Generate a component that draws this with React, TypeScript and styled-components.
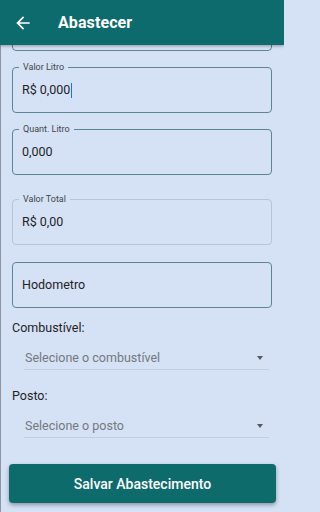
import React from "react";
import styled, { createGlobalStyle } from "styled-components";

const Global = createGlobalStyle`
  html, body { margin: 0; padding: 0; }
  body { font-family: Roboto, "Noto Sans", Arial, sans-serif; background: #d5e2f6; }
  * { box-sizing: border-box; }
`;

const Screen = styled.div`
  width: 284px;
  height: 512px;
  overflow: hidden;
  background: #d5e2f6;
  display: flex;
  flex-direction: column;
  position: relative;
`;

const Header = styled.header`
  height: 45px;
  flex: 0 0 45px;
  background: #0e6b6d;
  display: flex;
  align-items: center;
  padding-left: 13px;
  gap: 25px;
  position: relative;
  z-index: 2;
  box-shadow: 0 1px 3px rgba(0, 0, 0, 0.35);
`;

const BackButton = styled.button`
  width: 20px;
  height: 20px;
  padding: 0;
  border: 0;
  background: transparent;
  display: flex;
  align-items: center;
  justify-content: center;
  margin-top: 1px;
`;

const Title = styled.h1`
  margin: 1px 0 0 0;
  color: #ffffff;
  font-size: 16px;
  line-height: 20px;
  font-weight: 700;
  letter-spacing: 0.1px;
`;

const Body = styled.div`
  flex: 1;
  display: flex;
  flex-direction: column;
  border-left: 1px solid #8c96a4;
  overflow: hidden;
`;

const Form = styled.div`
  display: flex;
  flex-direction: column;
  padding: 0 12px 0 11px;
`;

const Field = styled.div<{ $muted?: boolean; $gap?: number }>`
  position: relative;
  flex: 0 0 46px;
  height: 46px;
  margin-top: ${(p) => p.$gap ?? 16}px;
  border: 1px solid ${(p) => (p.$muted ? "#b6c4d6" : "#5b8794")};
  border-radius: 4px;
  display: flex;
  align-items: center;
  padding: 0 9px;
  &:first-child {
    margin-top: -40px;
  }
`;

const FieldLabel = styled.span`
  position: absolute;
  left: 6px;
  top: -6px;
  padding: 0 4px;
  background: #d5e2f6;
  font-size: 9px;
  line-height: 11px;
  color: #3f4448;
`;

const Value = styled.span`
  font-size: 12.5px;
  color: #1f2225;
  display: flex;
  align-items: center;
  line-height: 16px;
`;

const Caret = styled.span`
  display: inline-block;
  width: 1px;
  height: 15px;
  background: #1a73e8;
  margin-left: 1px;
`;

const SectionLabel = styled.div<{ $gap: number }>`
  margin-top: ${(p) => p.$gap}px;
  font-size: 12.5px;
  line-height: 15px;
  color: #1f2225;
`;

const Picker = styled.div`
  margin: 11px 3px 0 12px;
  height: 24px;
  border-bottom: 1px solid #c3cedd;
  display: flex;
  align-items: center;
  justify-content: space-between;
  padding: 0 6px 1px 1px;
`;

const PickerText = styled.span`
  font-size: 12.5px;
  color: #74787c;
`;

const DropCaret = styled.span`
  width: 0;
  height: 0;
  border-left: 3.5px solid transparent;
  border-right: 3.5px solid transparent;
  border-top: 4px solid #555a5e;
  margin-top: 1px;
`;

const Footer = styled.div`
  padding: 26px 8px 0 8px;
`;

const SaveButton = styled.button`
  width: 100%;
  height: 39px;
  border: 0;
  border-radius: 4px;
  background: #0e6b6b;
  color: #ffffff;
  font-family: Roboto, "Noto Sans", Arial, sans-serif;
  font-size: 14px;
  font-weight: 500;
  box-shadow: 0 2px 4px rgba(0, 0, 0, 0.35);
`;

const ArrowBack = () => (
  <svg width="20" height="20" viewBox="0 0 24 24" fill="#ffffff">
    <path d="M20 11H7.83l5.59-5.59L12 4l-8 8 8 8 1.41-1.41L7.83 13H20v-2z" />
  </svg>
);

export default function App() {
  return (
    <>
      <Global />
      <Screen>
        <Header>
          <BackButton aria-label="Voltar">
            <ArrowBack />
          </BackButton>
          <Title>Abastecer</Title>
        </Header>
        <Body>
          <Form>
            <Field />
            <Field>
              <FieldLabel>Valor Litro</FieldLabel>
              <Value>
                R$ 0,000
                <Caret />
              </Value>
            </Field>
            <Field>
              <FieldLabel>Quant. Litro</FieldLabel>
              <Value>0,000</Value>
            </Field>
            <Field $muted $gap={24}>
              <FieldLabel>Valor Total</FieldLabel>
              <Value>R$ 0,00</Value>
            </Field>
            <Field $gap={17}>
              <Value>Hodometro</Value>
            </Field>
            <SectionLabel $gap={12}>Combustível:</SectionLabel>
            <Picker>
              <PickerText>Selecione o combustível</PickerText>
              <DropCaret />
            </Picker>
            <SectionLabel $gap={18}>Posto:</SectionLabel>
            <Picker>
              <PickerText>Selecione o posto</PickerText>
              <DropCaret />
            </Picker>
          </Form>
          <Footer>
            <SaveButton>Salvar Abastecimento</SaveButton>
          </Footer>
        </Body>
      </Screen>
    </>
  );
}
